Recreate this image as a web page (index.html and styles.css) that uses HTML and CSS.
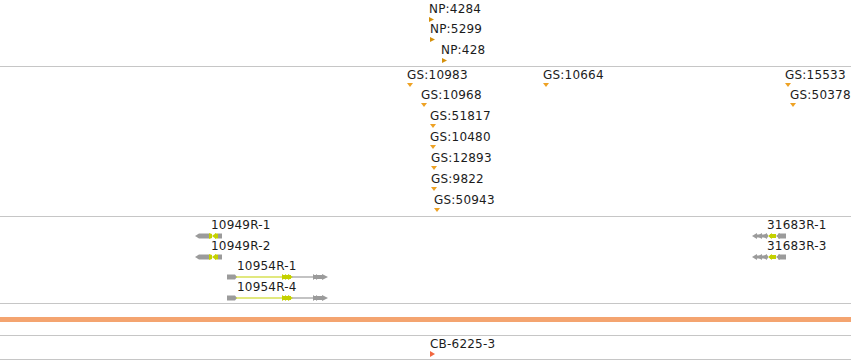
FILE: index.html
```html
<!DOCTYPE html>
<html lang="en">
<head>
    <meta charset="UTF-8">
    <title>Track view</title>
<link rel="stylesheet" href="styles.css">
</head>
<body>
    <div class="view">
        <!-- NP track -->
        <div class="track track-np">
            <div class="feat np" style="left:429px;top:3px"><span class="label">NP:4284</span>
                <svg width="5" height="5"><polygon points="0,0 5,2.5 0,5"/></svg></div>
            <div class="feat np" style="left:430px;top:23px"><span class="label">NP:5299</span>
                <svg width="5" height="5"><polygon points="0,0 5,2.5 0,5"/></svg></div>
            <div class="feat np" style="left:441px;top:44px"><span class="label">NP:428</span>
                <svg width="5" height="5" class="shift1"><polygon points="0,0 5,2.5 0,5"/></svg></div>
        </div>

        <!-- GS track -->
        <div class="track track-gs">
            <div class="feat gs" style="left:407px;top:2px"><span class="label">GS:10983</span>
                <svg width="6" height="4"><polygon points="0,0 6,0 3,4"/></svg></div>
            <div class="feat gs" style="left:421px;top:22px"><span class="label">GS:10968</span>
                <svg width="6" height="4"><polygon points="0,0 6,0 3,4"/></svg></div>
            <div class="feat gs" style="left:430px;top:43px"><span class="label">GS:51817</span>
                <svg width="6" height="4"><polygon points="0,0 6,0 3,4"/></svg></div>
            <div class="feat gs" style="left:430px;top:64px"><span class="label">GS:10480</span>
                <svg width="6" height="4"><polygon points="0,0 6,0 3,4"/></svg></div>
            <div class="feat gs" style="left:431px;top:85px"><span class="label">GS:12893</span>
                <svg width="6" height="4"><polygon points="0,0 6,0 3,4"/></svg></div>
            <div class="feat gs" style="left:431px;top:106px"><span class="label">GS:9822</span>
                <svg width="6" height="4"><polygon points="0,0 6,0 3,4"/></svg></div>
            <div class="feat gs" style="left:434px;top:127px"><span class="label">GS:50943</span>
                <svg width="6" height="4"><polygon points="0,0 6,0 3,4"/></svg></div>
            <div class="feat gs" style="left:543px;top:2px"><span class="label">GS:10664</span>
                <svg width="6" height="4"><polygon points="0,0 6,0 3,4"/></svg></div>
            <div class="feat gs" style="left:785px;top:2px"><span class="label">GS:15533</span>
                <svg width="6" height="4"><polygon points="0,0 6,0 3,4"/></svg></div>
            <div class="feat gs" style="left:790px;top:22px"><span class="label">GS:50378</span>
                <svg width="6" height="4"><polygon points="0,0 6,0 3,4"/></svg></div>
        </div>

        <!-- gene models -->
        <div class="track track-gene">
            <div class="feat gene" style="left:211px;top:2px"><span class="label">10949R-1</span>
                <svg class="g-short" width="27" height="6">
                    <polygon class="cds" points="0,3 4,0.5 14,0.5 14,5.5 4,5.5"/>
                    <polygon class="utr" points="14,0 17,1 17,5 14,6"/>
                    <polygon class="utr" points="17,3 21,0 21,6"/>
                    <rect class="utr" x="20" y="0.5" width="3" height="5"/>
                    <rect class="cds" x="23" y="0.5" width="4" height="5"/>
                </svg></div>
            <div class="feat gene" style="left:211px;top:23px"><span class="label">10949R-2</span>
                <svg class="g-short" width="27" height="6">
                    <polygon class="cds" points="0,3 4,0.5 14,0.5 14,5.5 4,5.5"/>
                    <polygon class="utr" points="14,0 17,1 17,5 14,6"/>
                    <polygon class="utr" points="17,3 21,0 21,6"/>
                    <rect class="utr" x="20" y="0.5" width="3" height="5"/>
                    <rect class="cds" x="23" y="0.5" width="4" height="5"/>
                </svg></div>
            <div class="feat gene" style="left:237px;top:43px"><span class="label">10954R-1</span>
                <svg class="g-long" width="102" height="6">
                    <polygon class="cds" points="0,0.5 8,0.5 10,3 8,5.5 0,5.5"/>
                    <line class="intron-y" x1="9" y1="3" x2="55" y2="3"/>
                    <rect class="utr" x="55" y="1" width="9" height="4"/>
                    <polygon class="utr" points="55,0 59,3 55,6"/>
                    <polygon class="utr" points="58,0 62,3 58,6"/>
                    <polygon class="utr" points="61,0 66,3 61,6"/>
                    <line class="intron-g" x1="65" y1="3" x2="87" y2="3"/>
                    <rect class="cds" x="86" y="1" width="10" height="4"/>
                    <polygon class="cds" points="86,0 90,3 86,6"/>
                    <polygon class="cds" points="89,0 93,3 89,6"/>
                    <polygon class="cds" points="95,0 101,3 95,6"/>
                </svg></div>
            <div class="feat gene" style="left:237px;top:64px"><span class="label">10954R-4</span>
                <svg class="g-long" width="102" height="6">
                    <polygon class="cds" points="0,0.5 8,0.5 10,3 8,5.5 0,5.5"/>
                    <line class="intron-y" x1="9" y1="3" x2="55" y2="3"/>
                    <rect class="utr" x="55" y="1" width="9" height="4"/>
                    <polygon class="utr" points="55,0 59,3 55,6"/>
                    <polygon class="utr" points="58,0 62,3 58,6"/>
                    <polygon class="utr" points="61,0 66,3 61,6"/>
                    <line class="intron-g" x1="65" y1="3" x2="87" y2="3"/>
                    <rect class="cds" x="86" y="1" width="10" height="4"/>
                    <polygon class="cds" points="86,0 90,3 86,6"/>
                    <polygon class="cds" points="89,0 93,3 89,6"/>
                    <polygon class="cds" points="95,0 101,3 95,6"/>
                </svg></div>
            <div class="feat gene" style="left:767px;top:2px"><span class="label">31683R-1</span>
                <svg class="g-rev" width="35" height="6">
                    <rect class="cds" x="4" y="1.5" width="12" height="3"/>
                    <polygon class="cds" points="0,3 5,0 5,6"/>
                    <polygon class="cds" points="5,3 10,0 10,6"/>
                    <polygon class="cds" points="10,3 15,0 15,6"/>
                    <rect class="utr" x="18" y="1" width="6" height="4"/>
                    <polygon class="utr" points="16,3 20,0 20,6"/>
                    <rect class="cds" x="26" y="0.5" width="8" height="5"/>
                    <polygon class="cds" points="24,3 28,0 28,6"/>
                </svg></div>
            <div class="feat gene" style="left:767px;top:23px"><span class="label">31683R-3</span>
                <svg class="g-rev" width="35" height="6">
                    <rect class="cds" x="4" y="1.5" width="12" height="3"/>
                    <polygon class="cds" points="0,3 5,0 5,6"/>
                    <polygon class="cds" points="5,3 10,0 10,6"/>
                    <polygon class="cds" points="10,3 15,0 15,6"/>
                    <rect class="utr" x="18" y="1" width="6" height="4"/>
                    <polygon class="utr" points="16,3 20,0 20,6"/>
                    <rect class="cds" x="26" y="0.5" width="8" height="5"/>
                    <polygon class="cds" points="24,3 28,0 28,6"/>
                </svg></div>
        </div>

        <div class="ruler"></div>

        <!-- CB track -->
        <div class="track track-cb">
            <div class="feat cb" style="left:430px;top:2px"><span class="label">CB-6225-3</span>
                <svg width="5" height="6"><polygon points="0,0 5,3 0,6"/></svg></div>
        </div>
    </div>
</body>
</html>
```

FILE: styles.css
```css
/* track view */
body {
    margin: 0;
    background-color: #ffffff;
    font-family: "DejaVu Sans", "Liberation Sans", sans-serif;
    font-size: 12px;
    color: #1c1c1c;
}

.view {
    width: 851px;
    height: 360px;
    overflow: hidden;
}

.track {
    position: relative;
    border-bottom: 1px solid #c6c6c6;
}

.track-np { height: 66px; }
.track-gs { height: 149px; }
.track-gene { height: 86px; }
.track-cb {
    height: 23px;
    border-top: 1px solid #c6c6c6;
}

.ruler {
    height: 5px;
    margin: 13px 0;
    background-color: #f4a470;
}

.feat {
    position: absolute;
    line-height: 12px;
    white-space: nowrap;
}

.feat .label {
    display: block;
    height: 12px;
    letter-spacing: 0.2px;
}

.feat svg {
    display: block;
    margin-top: 2px;
}

.np svg { fill: #d4900c; }
.np .shift1 { margin-left: 1px; }
.gs svg { fill: #eea224; }
.cb svg { fill: #f2673f; margin-top: 1px; }

.gene svg { margin-top: 2px; }
.g-short { margin-left: -16px; }
.g-long { margin-left: -10px; }
.g-rev { margin-left: -15px; }

.cds { fill: #9b9b9b; }
.utr { fill: #c4d100; }
.intron-y { stroke: #c4d100; stroke-width: 1.2; }
.intron-g { stroke: #9b9b9b; stroke-width: 1.2; }
```
